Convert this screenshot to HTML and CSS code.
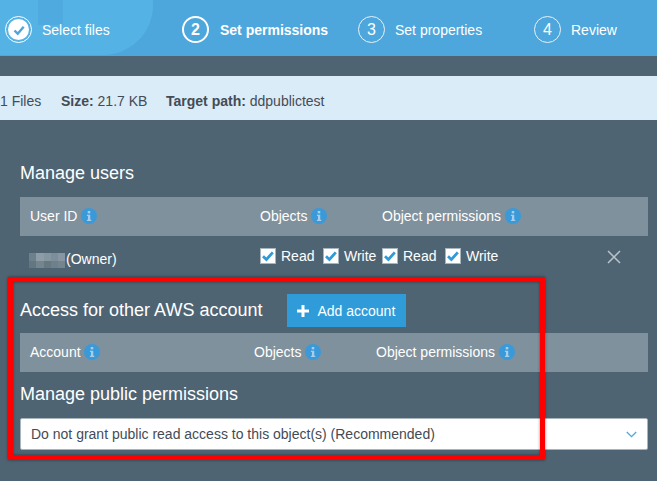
FILE: index.html
```html
<!DOCTYPE html>
<html>
<head>
    <title>Upload</title>
    <link rel="stylesheet" href="styles.css">
</head>
<body>
    <svg class="defs" width="0" height="0">
        <symbol id="info" viewBox="0 0 14 14">
            <circle cx="7" cy="7" r="7" fill="#3a9ad9"/>
            <rect x="5.9" y="2.6" width="2.2" height="2.1" fill="#a9cde6"/>
            <path d="M5.2 5.9h2.9v4.4h.9v1.1H5.2v-1.1h.9V7H5.2z" fill="#a9cde6"/>
        </symbol>
        <symbol id="tick" viewBox="0 0 16 16">
            <path d="M3 8.2l3.4 3.2 6.4-7" fill="none" stroke="#2f9bd9" stroke-width="2.8"/>
        </symbol>
    </svg>

    <div class="steps">
        <div class="steps-shape"></div>
        <div class="steps-notch"></div>
        <div class="step">
            <span class="step-done">
                <svg width="20" height="20" viewBox="0 0 20 20"><path d="M5.5 10.5l3.2 3.2 6-7" fill="none" stroke="#4da7dc" stroke-width="2.4"/></svg>
            </span>
            <span>Select files</span>
        </div>
        <div class="step step-active"><span class="step-num">2</span><span>Set permissions</span></div>
        <div class="step"><span class="step-num">3</span><span>Set properties</span></div>
        <div class="step"><span class="step-num">4</span><span>Review</span></div>
    </div>

    <div class="summary">
        <span class="summary-files">1 Files</span>
        <span class="summary-size"><b>Size:</b> 21.7 KB</span>
        <span><b>Target path:</b> ddpublictest</span>
    </div>

    <div class="content">
        <h3 class="title title-users">Manage users</h3>
        <div class="thead">
            <span class="col-user">User ID <svg class="info"><use href="#info"/></svg></span>
            <span class="col-obj">Objects <svg class="info"><use href="#info"/></svg></span>
            <span>Object permissions <svg class="info"><use href="#info"/></svg></span>
        </div>
        <div class="owner-row">
            <div class="owner">
                <svg class="mosaic" width="36" height="15" viewBox="0 0 36 15">
                    <rect width="36" height="15" fill="#6d808c"/>
                    <rect x="7" width="8" height="8" fill="#8d9ca6"/>
                    <rect x="15" width="7" height="8" fill="#8596a0"/>
                    <rect x="22" width="7" height="8" fill="#7c8e99"/>
                    <rect x="29" width="7" height="8" fill="#8796a0"/>
                    <rect x="0" y="8" width="7" height="7" fill="#63777f"/>
                    <rect x="7" y="8" width="8" height="7" fill="#73868f"/>
                    <rect x="15" y="8" width="7" height="7" fill="#67797f"/>
                    <rect x="29" y="8" width="7" height="7" fill="#74858f"/>
                </svg>
                <span class="owner-name">(Owner)</span>
            </div>
            <div class="perms">
                <label class="perm perm-read"><span class="check"><svg width="16" height="16"><use href="#tick"/></svg></span>Read</label>
                <label class="perm perm-write"><span class="check"><svg width="16" height="16"><use href="#tick"/></svg></span>Write</label>
                <label class="perm perm-read"><span class="check"><svg width="16" height="16"><use href="#tick"/></svg></span>Read</label>
                <label class="perm"><span class="check"><svg width="16" height="16"><use href="#tick"/></svg></span>Write</label>
            </div>
            <svg class="remove" width="14" height="14" viewBox="0 0 14 14"><path d="M1 1l12 12M13 1L1 13" stroke="#b9c3ca" stroke-width="1.5" fill="none"/></svg>
        </div>

        <div class="account-head">
            <h3 class="title">Access for other AWS account</h3>
            <button class="add-btn">
                <svg width="12" height="12" viewBox="0 0 12 12"><path d="M4.5 0h3v4.5H12v3H7.5V12h-3V7.5H0v-3h4.5z" fill="#fff"/></svg>
                Add account
            </button>
        </div>
        <div class="thead thead-account">
            <span class="col-user">Account <svg class="info"><use href="#info"/></svg></span>
            <span class="col-obj">Objects <svg class="info"><use href="#info"/></svg></span>
            <span>Object permissions <svg class="info"><use href="#info"/></svg></span>
        </div>

        <h3 class="title title-public">Manage public permissions</h3>
        <div class="select">
            <span>Do not grant public read access to this object(s) (Recommended)</span>
            <svg width="11" height="7" viewBox="0 0 11 7"><path d="M.8 1l4.7 4.6L10.2 1" fill="none" stroke="#4da7dc" stroke-width="1.3"/></svg>
        </div>
    </div>

    <div class="highlight"></div>
</body>
</html>
```

FILE: styles.css
```css
* {
    box-sizing: border-box;
}
html, body {
    height: 100%;
}
body {
    margin: 0;
    background-color: #4f6473;
    font-family: "Liberation Sans", Arial, sans-serif;
    font-size: 14px;
    color: #fff;
    overflow: hidden;
}
.defs {
    position: absolute;
}
.steps {
    position: relative;
    display: grid;
    grid-template-columns: 177px 176px 176px 1fr;
    height: 56px;
    padding: 3px 0 0 5px;
    background-color: #4da7dc;
    overflow: hidden;
}
.steps-shape {
    position: absolute;
    left: -60px;
    top: -100px;
    width: 213px;
    height: 155px;
    border-radius: 0 0 50px 0;
    background-color: #55b2e4;
}
.steps-notch {
    position: absolute;
    left: 38px;
    top: 0;
    width: 25px;
    height: 25px;
    background-color: #4fabdf;
}
.step {
    position: relative;
    display: flex;
    align-items: center;
    gap: 10px;
}
.step-num {
    display: flex;
    align-items: center;
    justify-content: center;
    width: 27px;
    height: 27px;
    border: 1px solid #e6f2fa;
    border-radius: 50%;
    font-size: 16px;
}
.step-active {
    gap: 11px;
    font-weight: bold;
}
.step-active .step-num {
    border: 2px solid #fff;
}
.step-done {
    display: flex;
    align-items: center;
    justify-content: center;
    width: 27px;
    height: 27px;
    border-radius: 50%;
    background-color: #fff;
    background-clip: content-box;
    padding: 2px;
    border: 1px solid #fff;
}
.summary {
    display: flex;
    align-items: center;
    height: 44px;
    margin-top: 20px;
    padding-top: 5px;
    background-color: #daecf8;
    color: #444b55;
}
.summary-files {
    width: 61px;
}
.summary-size {
    width: 105px;
}
.content {
    padding: 41px 9px 0 20px;
}
.title {
    margin: 0;
    font-size: 18px;
    font-weight: normal;
    line-height: 24px;
}
.thead {
    display: flex;
    align-items: center;
    height: 39px;
    margin-top: 12px;
    padding: 0 0 2px 10px;
    background-color: #7f919d;
}
.col-user {
    width: 230px;
}
.col-obj {
    width: 122px;
}
.thead-account {
    margin-top: 6px;
}
.thead-account .col-user {
    width: 224px;
}
.info {
    width: 16px;
    height: 16px;
    vertical-align: -3px;
}
.owner-row {
    display: flex;
    align-items: center;
    height: 42px;
    padding-left: 9px;
}
.owner {
    display: flex;
    align-items: center;
    width: 231px;
    margin-top: 4px;
}
.mosaic {
    margin-top: 3px;
}
.owner-name {
    margin-left: 1px;
}
.perms {
    display: flex;
    width: 347px;
    margin-top: -2px;
}
.perm {
    display: flex;
    align-items: center;
    gap: 5px;
}
.perm-read {
    width: 63px;
}
.perm-write {
    width: 59px;
}
.check {
    width: 16px;
    height: 16px;
    background-color: #fff;
    border: 1px solid #a9b5bd;
    display: flex;
    align-items: center;
    justify-content: center;
}
.check svg {
    flex: none;
}
.remove {
    margin-top: -1px;
}
.account-head {
    display: flex;
    align-items: center;
    gap: 24px;
    height: 33px;
    margin-top: 16px;
}
.account-head .title {
    margin-bottom: 2px;
}
.add-btn {
    display: flex;
    align-items: center;
    gap: 8px;
    height: 33px;
    width: 119px;
    margin-left: 1px;
    padding: 0 0 0 10px;
    border: none;
    background-color: #2f9bd9;
    color: #fff;
    font-family: inherit;
    font-size: 14px;
}
.title-public {
    margin-top: 10px;
}
.select {
    display: flex;
    align-items: center;
    justify-content: space-between;
    height: 32px;
    margin-top: 12px;
    padding: 0 10px;
    background-color: #fff;
    border: 1px solid #a9b5bd;
    border-radius: 2px;
    color: #444b55;
}
.highlight {
    position: absolute;
    left: 8px;
    top: 277px;
    width: 537px;
    height: 183px;
    border: 5px solid #f00;
    box-shadow: 0 0 3px rgba(0, 0, 0, 0.45), inset 0 0 3px rgba(0, 0, 0, 0.45);
}
```
